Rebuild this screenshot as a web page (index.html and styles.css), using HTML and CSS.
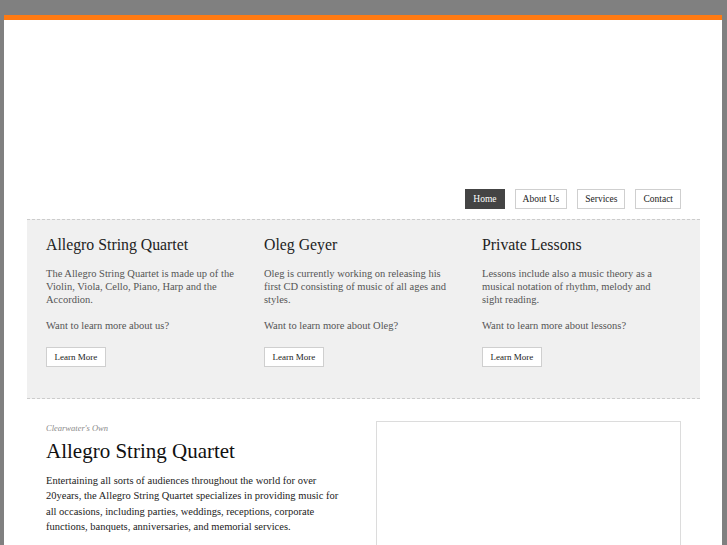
FILE: index.html
```html
<!DOCTYPE html>
<html>
<head>
<meta charset="utf-8">
<link rel="stylesheet" href="styles.css">
</head>
<body>
<div class="page">
  <div class="header"></div>
  <nav class="nav">
    <a class="nav-btn active">Home</a>
    <a class="nav-btn">About Us</a>
    <a class="nav-btn">Services</a>
    <a class="nav-btn">Contact</a>
  </nav>
  <section class="features">
    <div class="feature">
      <h2>Allegro String Quartet</h2>
      <p>The Allegro String Quartet is made up of the Violin, Viola, Cello, Piano, Harp and the Accordion.</p>
      <p>Want to learn more about us?</p>
      <a class="btn">Learn More</a>
    </div>
    <div class="feature">
      <h2>Oleg Geyer</h2>
      <p>Oleg is currently working on releasing his first CD consisting of music of all ages and styles.</p>
      <p>Want to learn more about Oleg?</p>
      <a class="btn">Learn More</a>
    </div>
    <div class="feature">
      <h2>Private Lessons</h2>
      <p>Lessons include also a music theory as a musical notation of rhythm, melody and sight reading.</p>
      <p>Want to learn more about lessons?</p>
      <a class="btn">Learn More</a>
    </div>
  </section>
  <section class="main">
    <div class="intro">
      <div class="kicker">Clearwater's Own</div>
      <h1>Allegro String Quartet</h1>
      <p>Entertaining all sorts of audiences throughout the world for over 20years, the Allegro String Quartet specializes in providing music for all occasions, including parties, weddings, receptions, corporate functions, banquets, anniversaries, and memorial services.</p>
    </div>
    <div class="media"></div>
  </section>
</div>
</body>
</html>
```
FILE: styles.css
```css
html, body {
  margin: 0;
  padding: 0;
  height: 100%;
  overflow: hidden;
}
body {
  background: #808080;
  font-family: "Liberation Serif", "Times New Roman", serif;
  color: #222;
}
.page {
  box-sizing: border-box;
  margin: 15px 5px 0 4px;
  background: #fff;
  border-top: 5px solid #ff7a12;
  height: 530px;
  overflow: hidden;
}
.header {
  height: 169px;
}
.nav {
  display: flex;
  justify-content: flex-end;
  gap: 10px;
  padding-right: 41px;
}
.nav-btn {
  display: block;
  height: 18px;
  line-height: 18px;
  padding: 0 7px;
  border: 1px solid #cfcfcf;
  font-size: 9.5px;
  color: #222;
  background: #fff;
}
.nav-btn.wide {
  padding: 0 8px;
}
.nav-btn.active {
  background: #444;
  border-color: #444;
  color: #fff;
}
.features {
  margin: 10px 22px 0 23px;
  background: #f0f0f0;
  border-top: 1px dashed #cccccc;
  border-bottom: 1px dashed #cccccc;
  display: flex;
  padding: 16px 0 31px 19px;
}
.feature {
  width: 218px;
  flex-shrink: 0;
}
.feature h2 {
  margin: 0;
  font-weight: normal;
  font-size: 15.8px;
  line-height: 18px;
  color: #222;
}
.feature p {
  margin: 13px 0 0;
  width: 190px;
  font-size: 10.5px;
  line-height: 13px;
  color: #555;
}
.btn {
  display: inline-block;
  margin-top: 15px;
  height: 18px;
  line-height: 18px;
  padding: 0 7.5px;
  border: 1px solid #cfcfcf;
  background: #fff;
  font-size: 9px;
  color: #222;
}
.main {
  display: flex;
  padding: 22px 41px 0 42px;
  gap: 30px;
}
.intro {
  width: 300px;
}
.kicker {
  font-style: italic;
  font-size: 8.5px;
  line-height: 10px;
  color: #8a8a8a;
  margin-top: 2px;
}
.intro h1 {
  margin: 6px 0 0;
  font-weight: normal;
  font-size: 21px;
  line-height: 24px;
  color: #111;
}
.intro p {
  margin: 10px 0 0;
  font-size: 10.5px;
  line-height: 15.4px;
  color: #222;
}
.media {
  width: 303px;
  height: 130px;
  border: 1px solid #dcdcdc;
}
```
